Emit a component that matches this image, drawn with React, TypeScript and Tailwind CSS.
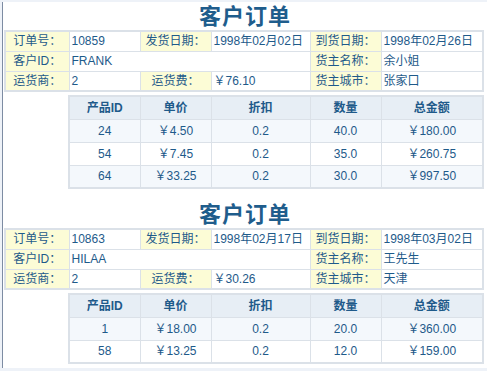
type Item = { id: number; price: string; discount: string; qty: string; total: string };

type Order = {
  no: string;
  shipDate: string;
  arriveDate: string;
  customer: string;
  shipName: string;
  shipper: string;
  freight: string;
  city: string;
  items: Item[];
};

const orders: Order[] = [
  {
    no: "10859",
    shipDate: "1998年02月02日",
    arriveDate: "1998年02月26日",
    customer: "FRANK",
    shipName: "余小姐",
    shipper: "2",
    freight: "￥76.10",
    city: "张家口",
    items: [
      { id: 24, price: "￥4.50", discount: "0.2", qty: "40.0", total: "￥180.00" },
      { id: 54, price: "￥7.45", discount: "0.2", qty: "35.0", total: "￥260.75" },
      { id: 64, price: "￥33.25", discount: "0.2", qty: "30.0", total: "￥997.50" },
    ],
  },
  {
    no: "10863",
    shipDate: "1998年02月17日",
    arriveDate: "1998年03月02日",
    customer: "HILAA",
    shipName: "王先生",
    shipper: "2",
    freight: "￥30.26",
    city: "天津",
    items: [
      { id: 1, price: "￥18.00", discount: "0.2", qty: "20.0", total: "￥360.00" },
      { id: 58, price: "￥13.25", discount: "0.2", qty: "12.0", total: "￥159.00" },
    ],
  },
];

const label = "h-[20px] border border-[#dbe1e8] bg-[#fcfcd6] text-center p-0";
const value = "h-[20px] border border-[#dbe1e8] bg-white pl-[2px] p-0";

function OrderBlock({ o }: { o: Order }) {
  return (
    <div className="mb-[11px]">
      <h2 className="h-[28px] pt-[3px] text-center text-[22px] leading-[24px] font-bold tracking-[1px] text-[#1f5d8c]">
        客户订单
      </h2>
      <table className="ml-[1px] w-[478px] table-fixed border-collapse border-2 border-[#dbe1e8]">
        <colgroup>
          <col className="w-[64px]" />
          <col className="w-[71px]" />
          <col className="w-[71px]" />
          <col className="w-[99px]" />
          <col className="w-[71px]" />
          <col className="w-[102px]" />
        </colgroup>
        <tbody>
          <tr>
            <td className={label}>订单号：</td>
            <td className={value}>{o.no}</td>
            <td className={label}>发货日期：</td>
            <td className={value}>{o.shipDate}</td>
            <td className={label}>到货日期：</td>
            <td className={value}>{o.arriveDate}</td>
          </tr>
          <tr>
            <td className={label}>客户ID：</td>
            <td className={value} colSpan={3}>{o.customer}</td>
            <td className={label}>货主名称：</td>
            <td className={value}>{o.shipName}</td>
          </tr>
          <tr>
            <td className={label}>运货商：</td>
            <td className={value}>{o.shipper}</td>
            <td className={label}>运货费：</td>
            <td className={value}>{o.freight}</td>
            <td className={label}>货主城市：</td>
            <td className={value}>{o.city}</td>
          </tr>
        </tbody>
      </table>

      <table className="mt-[3px] ml-[65px] w-[414px] table-fixed border-collapse border-2 border-[#dbe1e8] text-center">
        <colgroup>
          <col className="w-[71px]" />
          <col className="w-[71px]" />
          <col className="w-[99px]" />
          <col className="w-[71px]" />
          <col className="w-[102px]" />
        </colgroup>
        <thead>
          <tr className="bg-[#e7eef5] font-bold">
            {["产品ID", "单价", "折扣", "数量", "总金额"].map((h) => (
              <th key={h} className="h-[23px] border border-[#dbe1e8] p-0">
                {h}
              </th>
            ))}
          </tr>
        </thead>
        <tbody>
          {o.items.map((it, i) => (
            <tr key={it.id} className={i % 2 === 0 ? "bg-[#f4f8fc]" : "bg-white"}>
              <td className="h-[23px] border border-[#dbe1e8] p-0">{it.id}</td>
              <td className="border border-[#dbe1e8] p-0">{it.price}</td>
              <td className="border border-[#dbe1e8] p-0">{it.discount}</td>
              <td className="border border-[#dbe1e8] p-0">{it.qty}</td>
              <td className="border border-[#dbe1e8] p-0">{it.total}</td>
            </tr>
          ))}
        </tbody>
      </table>
    </div>
  );
}

export default function App() {
  return (
    <div
      className="min-h-screen bg-[#eef2f8] pt-[2px] pl-[2px] text-[12px] text-[#1e5a8a]"
      style={{ fontFamily: '"Liberation Sans", "Noto Sans CJK SC", sans-serif' }}
    >
      <div className="h-[366px] border-l border-[#7d8ca3] bg-white">
        {orders.map((o) => (
          <OrderBlock key={o.no} o={o} />
        ))}
      </div>
    </div>
  );
}
